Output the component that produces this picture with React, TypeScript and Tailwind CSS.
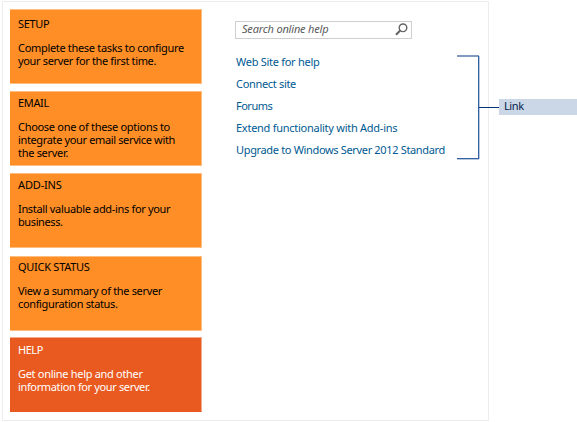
type Card = { title: string; titleTracking: string; lines: [string, string][]; active?: boolean; gap: string };

const cards: Card[] = [
  {
    title: 'SETUP',
    titleTracking: 'tracking-[-0.35px]',
    lines: [
      ['Complete these tasks to configure', 'tracking-[-0.32px]'],
      ['your server for the first time.', 'tracking-[-0.35px]'],
    ],
    gap: 'mt-0 pt-[7px]',
  },
  {
    title: 'EMAIL',
    titleTracking: 'tracking-[-0.35px]',
    lines: [
      ['Choose one of these options to', 'tracking-[-0.3px]'],
      ['integrate your email service with', 'tracking-[-0.36px]'],
      ['the server.', 'tracking-[-0.3px]'],
    ],
    gap: 'mt-[7px] pt-1',
  },
  {
    title: 'ADD-INS',
    titleTracking: 'tracking-[-0.15px]',
    lines: [
      ['Install valuable add-ins for your', 'tracking-[-0.33px]'],
      ['business.', 'tracking-[-0.4px]'],
    ],
    gap: 'mt-[7px] pt-1',
  },
  {
    title: 'QUICK STATUS',
    titleTracking: 'tracking-[-0.27px]',
    lines: [
      ['View a summary of the server', 'tracking-[-0.33px]'],
      ['configuration status.', 'tracking-[-0.35px]'],
    ],
    gap: 'mt-2 pt-[3px]',
  },
  {
    title: 'HELP',
    titleTracking: 'tracking-[-0.45px]',
    lines: [
      ['Get online help and other', 'tracking-[-0.3px]'],
      ['information for your server.', 'tracking-[-0.36px]'],
    ],
    active: true,
    gap: 'mt-[6px] pt-[5px]',
  },
];

const links: [string, string][] = [
  ['Web Site for help', 'tracking-[-0.28px]'],
  ['Connect site', 'tracking-[-0.32px]'],
  ['Forums', 'tracking-[-0.5px]'],
  ['Extend functionality with Add-ins', 'tracking-[-0.26px]'],
  ['Upgrade to Windows Server 2012 Standard', 'tracking-[-0.34px]'],
];

function TaskCard({ card }: { card: Card }) {
  const look = card.active
    ? 'border-x-[#f3ab8c] border-t-[#f3ab8c] border-b-[#e95a20] bg-[#e95a20] text-white'
    : 'border-[#ffbd7f] bg-[#ff8e26] text-black';
  return (
    <div className={`h-[75px] w-[192px] border-y border-r pl-2 ${look} ${card.gap}`}>
      <h2 className="mb-[11px] leading-[13px]">
        <span className={card.titleTracking}>{card.title}</span>
      </h2>
      {card.lines.map(([text, tracking]) => (
        <p key={text} className="leading-[13px]">
          <span className={tracking}>{text}</span>
        </p>
      ))}
    </div>
  );
}

export default function App() {
  return (
    <div className="relative h-[422px] w-[577px] overflow-hidden whitespace-nowrap bg-white pl-[2px] pt-px font-['Noto_Sans',sans-serif] text-[11px]">
      <main className="flex h-[420px] w-[487px] border border-[#ededed] pl-[7px] pt-[7px]">
        <nav className="w-[226px]">
          {cards.map((card) => (
            <TaskCard key={card.title} card={card} />
          ))}
        </nav>
        <section className="pt-3">
          <div className="-ml-px flex h-[18px] w-[177px] items-center justify-between border border-[#cfcfcf] pl-[6px] pr-[3px] text-[#5a5a5a]">
            <span className="-mt-px italic tracking-[-0.18px]">Search online help</span>
            <svg className="-mt-[2px]" width="13" height="13" viewBox="0 0 13 13" fill="none" stroke="#666">
              <circle cx="8" cy="4.8" r="3.8" strokeWidth="1.4" />
              <path d="M5.2 7.6 1 11.8" strokeWidth="2.1" />
            </svg>
          </div>
          <ul className="pt-[12px] text-[#005a92]">
            {links.map(([text, tracking]) => (
              <li key={text} className="h-[22px] leading-[22px]">
                <a className={tracking}>{text}</a>
              </li>
            ))}
          </ul>
        </section>
      </main>
      <div className="absolute left-[456px] top-[55px] flex items-start">
        <svg width="43" height="105" viewBox="0 0 43 105" fill="none">
          <path d="M1 1H23" stroke="#809bc0" strokeWidth="2" />
          <path d="M1 103.5H23" stroke="#3462a0" strokeWidth="1" />
          <path d="M1 104.5H23" stroke="#b9c8de" strokeWidth="1" />
          <path d="M22.5 1V104" stroke="#3462a0" strokeWidth="1" />
          <path d="M23.5 1V104" stroke="#b9c8de" strokeWidth="1" />
          <path d="M23 52.5H43" stroke="#003378" strokeWidth="1" />
        </svg>
        <div className="mt-11 h-4 w-[79px] bg-[#cbd7e6] pl-[5px] leading-[14px] text-[#001c4e]">
          <span className="tracking-[-0.4px]">Link</span>
        </div>
      </div>
    </div>
  );
}
